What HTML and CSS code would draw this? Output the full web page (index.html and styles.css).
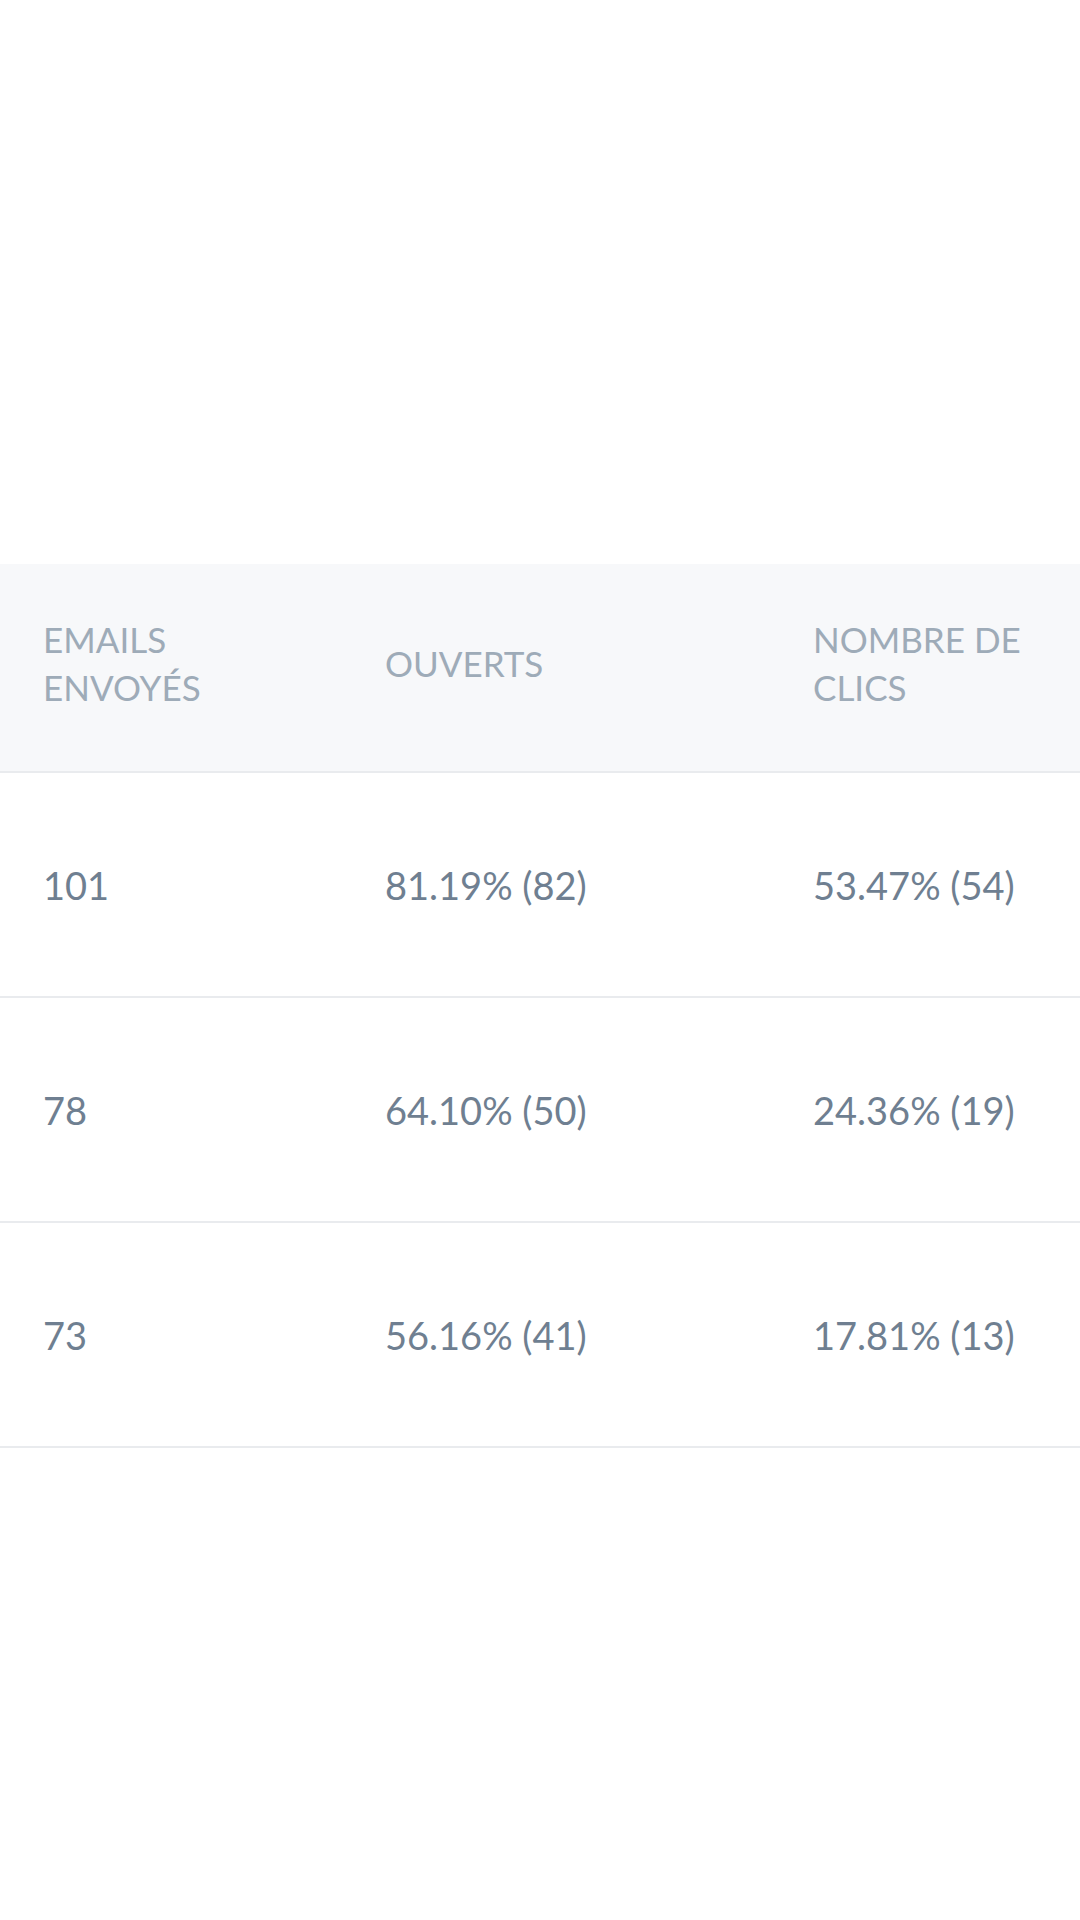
FILE: index.html
```html
<!DOCTYPE html>
<html lang="fr">

<head>
    <meta charset="UTF-8">
    <meta name="viewport" content="width=device-width, initial-scale=1.0">
    <title>Statistiques des campagnes</title>
    <link rel="stylesheet" href="styles.css">
</head>

<body>
    <div id="stats">
        <table class="stats-table">
            <colgroup>
                <col class="col-sent">
                <col class="col-open">
                <col class="col-clicks">
            </colgroup>
            <thead>
                <tr>
                    <th>EMAILS<br>ENVOYÉS</th>
                    <th>OUVERTS</th>
                    <th>NOMBRE DE<br>CLICS</th>
                </tr>
            </thead>
            <tbody>
                <tr>
                    <td>101</td>
                    <td>81.19% (82)</td>
                    <td>53.47% (54)</td>
                </tr>
                <tr>
                    <td>78</td>
                    <td>64.10% (50)</td>
                    <td>24.36% (19)</td>
                </tr>
                <tr>
                    <td>73</td>
                    <td>56.16% (41)</td>
                    <td>17.81% (13)</td>
                </tr>
            </tbody>
        </table>
    </div>
</body>

</html>
```

FILE: styles.css
```css
  /* Base */
  body {
      background-color: #fff;
      font-family: Lato, "Open Sans", sans-serif;
      margin: 0;
      padding: 0;
  }

  #stats {
      padding-top: 564px;
  }

  .stats-table {
      width: 100%;
      border-collapse: collapse;
      table-layout: fixed;
  }

  .col-sent {
      width: 342px;
  }

  .col-open {
      width: 428px;
  }

  .stats-table th {
      background-color: #f7f8fa;
      color: #9eabb8;
      font-size: 35px;
      font-weight: normal;
      line-height: 48px;
      text-align: left;
      padding: 0 0 10px 43px;
      height: 197px;
      border-bottom: 2px solid #e9ebee;
  }

  .stats-table td {
      color: #6f7f91;
      font-size: 38px;
      text-align: left;
      padding: 0 0 0 43px;
      height: 223px;
      border-bottom: 2px solid #e9ebee;
  }
```
